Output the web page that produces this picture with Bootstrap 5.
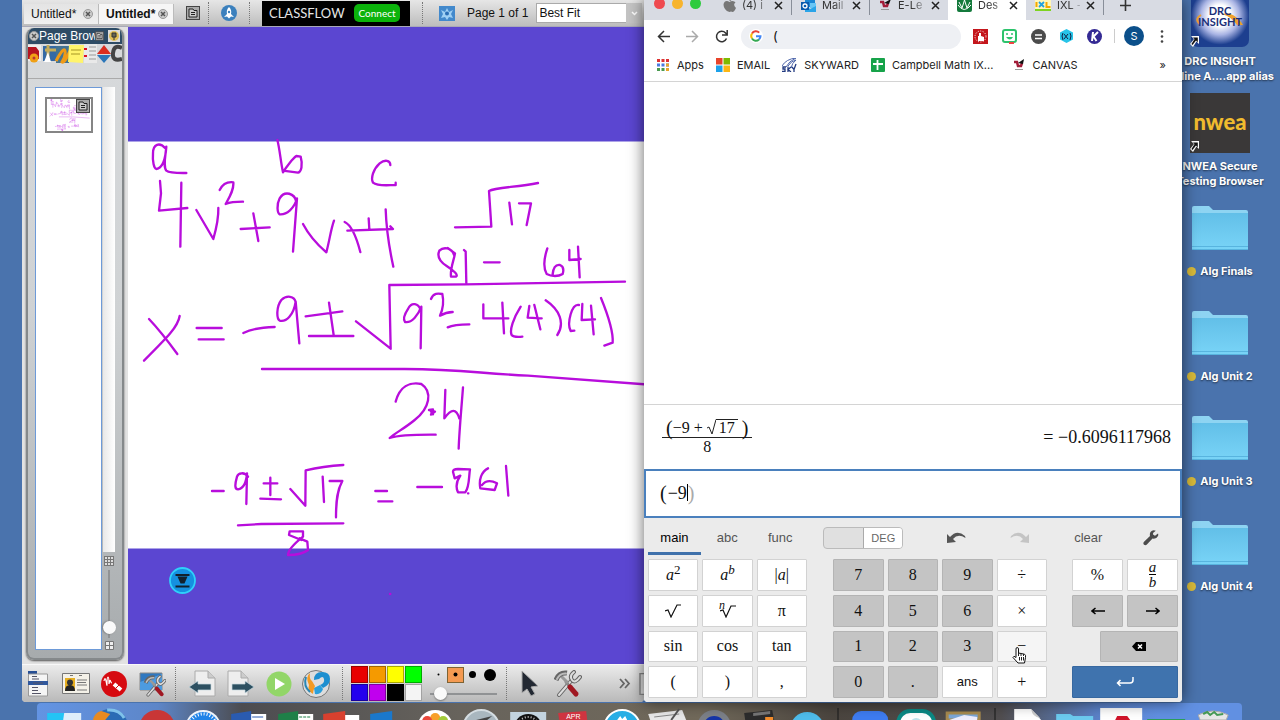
<!DOCTYPE html>
<html lang="en">
<head>
<meta charset="utf-8">
<meta name="viewport" content="width=device-width, initial-scale=1">
<title>Algebra desktop</title>
<link href="https://cdn.jsdelivr.net/npm/bootstrap@5.3.0/dist/css/bootstrap.min.css" rel="stylesheet">
<style>
:root{--ui:"Liberation Sans",Arial,sans-serif;--mac:Inter,"Liberation Sans",sans-serif;--math:"Liberation Serif","Times New Roman",serif}
body{font-family:var(--ui);font-size:12px;line-height:16px;color:#111;background:#4a73ad}
button,input,select{font:inherit;color:inherit}
svg{display:block;flex-shrink:0}
.plain{border:0;background:none;padding:0;display:flex;align-items:center;justify-content:center;flex-shrink:0}
.desktop{height:100vh;display:grid;grid-template-columns:22px minmax(0,622fr) minmax(0,538fr) 98px;grid-template-rows:minmax(0,1fr) 18px;background:#4a73ad}
/* whiteboard app */
.board{grid-column:2;background:#d9d9d9;border-radius:0 0 4px 4px;overflow:hidden}
.topbar{height:27px;background:linear-gradient(#e6e6e6,#bdbdbd);border-bottom:1px solid #a9a9b8;padding-left:2px}
.topbar>*{flex-shrink:0}
.doc{height:20px;width:75px;padding:0 5px 0 7px;background:linear-gradient(#e4e4e4,#f0f0f0);border-right:1px solid #bbb;margin-top:1px}
.doc.on{font-weight:bold;background:#f6f6f6}
.dots{width:1px;border-left:1px dotted #777;align-self:stretch;margin:2px 0}
.gapx{margin-left:12px;margin-right:12px}
.flow{background:#000;width:148px;height:25px;padding:0 10px 0 7px;font-family:Lato,sans-serif}
.flow span{color:#e5e5e5;font-size:13px}
.connect{background:#0bb30b;color:#fff;border:0;border-radius:5px;width:46px;height:18px;font-size:10px;line-height:12px;padding:0}
.zoomsel{appearance:none;border:1px solid #aaa;border-right:0;border-radius:0;background:#fff;width:90px;height:20px;padding:0 2px;font-size:12px;margin-left:8px}
.drop{width:16px;height:20px;background:#c4c4c4}
.side{width:106px;padding:1px 4px 4px;background:#e2e2e2}
.panel{border:2px solid #85898b;border-top:0;border-radius:8px;background:linear-gradient(#d8dadc,#cfd2d4 45%,#a7abad);overflow:hidden;box-shadow:0 1px 2px #555}
.ptitle{height:16px;background:#2e4c66;color:#fff;padding:0 2px 0 1px}
.ptitle span{flex:1;width:0;overflow:hidden;white-space:nowrap}
.ptools{height:35px;border-bottom:1px solid #aaa}
.pages{width:67px;background:#fff;border:1px solid #6d9ad8;margin-left:7px;padding:9px 0}
.thumb{position:relative;width:48px;height:36px;border:2px solid #858585;margin:0 auto;background:#fff;--pen:11}
.thumb .tmenu{position:absolute;right:1px;top:0}
.scroll{width:14px}
.track{flex:1;background:linear-gradient(90deg,#e8e8e8,#fff);width:12px;margin-bottom:4px}
.vbox{width:14px;height:73px;display:flex;align-items:center;justify-content:center;margin:1px 0}
.vbox input{width:68px;transform:rotate(90deg);flex-shrink:0}
input[type=range]{appearance:none;background:none;height:14px;margin:0;padding:0}
input[type=range]::-webkit-slider-runnable-track{height:2px;background:#909294}
input[type=range]::-webkit-slider-thumb{appearance:none;width:13px;height:13px;border-radius:50%;background:#fafafa;margin-top:-6px;box-shadow:0 1px 2px #777}
.canvas{background:#5b46d1;position:relative;overflow:hidden}
.canvas>svg{width:100%;height:100%}
.down{position:absolute;left:41px;bottom:70px}
.ink path{fill:none;stroke:#b80ddc;stroke-width:var(--pen,7);stroke-linecap:round;stroke-linejoin:round}
.tools{height:38px;border-top:1px solid #f8f8f8;background:linear-gradient(#ebebeb,#b9b9b9);padding-left:1px}
.tool{width:38px;height:36px}
.swatches{display:grid;grid-template-columns:repeat(4,17px);gap:1px;width:71px}
.swatches button{height:17px;border:1px solid #0005;padding:0}
.sizes .plain{width:17px;height:16px}
.sizes .sel{background:#f49a52;border:1px solid #7d6334}
/* browser window */
.browser{background:#fff;overflow:hidden;border-radius:0 0 4px 4px;font-family:var(--mac);min-width:0}
.shade{grid-column:3;grid-row:1;border-radius:0 0 4px 4px;box-shadow:0 0 16px #0009;z-index:1;display:flex;min-width:0}
.strip{height:30px;margin-top:-10px;background:#d8dbe3;font-size:11px}
.lights{width:70px;padding-left:10px;gap:7px}
.lights i{width:11px;height:11px;border-radius:50%;margin-bottom:4px}
.btab{width:78px;padding:0 8px 0 9px;gap:6px;height:30px;display:flex;align-items:center}
.btab .name{flex:1;width:0;overflow:hidden;white-space:nowrap;color:#333;-webkit-mask:linear-gradient(90deg,#000 50%,#0004)}
.btab.rule{border-right:1px solid #888e99;height:20px}
.btab.on{background:#fff;border-radius:6px 6px 0 0}
.nav1{height:32px;padding:0 18px 0 13px}
.url{background:#eef0f4;border-radius:13px;height:25px;padding:0 8px;gap:10px;margin:0 12px 0 13px;min-width:0}
.url input{border:0;background:none;padding:0;width:100%;outline:0;font-size:13px}
.exts{gap:14px}
.rule-v{width:1px;height:14px;background:#ccc;margin:0 9px 0 12px}
.avatar{width:20px;height:20px;background:#0b4f8a;font-size:11px}
.marks{height:30px;padding:0 16px 4px 13px;border-bottom:1px solid #d4d4d4;font-size:11px;color:#222;gap:12px}
.marks a{color:inherit;text-decoration:none;display:flex;align-items:center;white-space:nowrap;gap:7px}
.expr{height:65px;border-top:1px solid #d4d4d4;padding:0 11px 0 18px;font-family:var(--math);font-size:18px}
.frac{display:inline-flex;flex-direction:column;align-items:center;font-size:16px;line-height:18px}
.frac .top{border-bottom:1px solid #222;padding:0 4px;display:flex;align-items:center}
.frac .paren{font-size:20px}
.root{display:flex;align-items:stretch}
.root b{font-weight:400;border-top:1px solid #222;padding:0 3px;line-height:16px}
.field{height:49px;border:2px solid #4a80bd;padding:0 14px 2px;font-family:var(--math);font-size:18px}
.field .caret{width:1px;height:17px;background:#000}
.field .paren{font-size:20px;margin-right:1px}
.field .ghost{color:#aaa}
.calc{background:#ebebeb;font-family:var(--ui)}
.chead{display:grid;grid-template-columns:162fr 17fr 240fr 5fr 106fr;height:41px;padding:0 4px;font-size:13px;color:#555}
.ctab{flex:1;height:37px;border-bottom:3px solid transparent!important;padding-top:5px}
.ctab.on{border-color:#3f71ab!important;color:#000}
.deg{width:80px;height:22px;border:1px solid #bbb;border-radius:4px;background:#e0e0e0;overflow:hidden;padding:0;display:flex}
.deg span{width:50%;margin-left:auto;background:#fff;border-left:1px solid #aaa;font-size:11px;line-height:20px;color:#666}
.hist{grid-column:3;padding-right:40px;gap:44px;height:40px}
.misc{grid-column:5;padding-right:19px;height:40px}
.keys{padding:0 4px 4px;height:143px}
.kg{display:grid;gap:4px;grid-auto-rows:minmax(0,1fr);min-width:0}
.kg button{border:1px solid #d2d2d2;border-radius:1px;background:#fff;font-family:var(--math);font-size:16px;line-height:20px;padding:0;display:flex;align-items:center;justify-content:center;position:relative;min-width:0}
.kg .num{background:#c4c4c4;border-color:#b4b4b4}
.kg sup{font-size:13px;top:-6px}
.kg .ans{font-family:var(--ui);font-size:13px}
.kg .enter{background:#3f73ae;border-color:#3768a0;grid-column:span 2}
.kg .bksp{grid-column:span 2;margin-left:26%}
.kg .nth{font-size:12px;line-height:10px;margin:-12px -5px 0 0}
.hand{position:absolute;left:14px;top:15px}
.ab{font-size:15px;line-height:14px;font-style:italic}
.ab i{display:block}.ab i:first-child{border-bottom:1px solid #000}
/* desktop icons */
.iconcol{grid-column:4;overflow:hidden;min-width:0}
.stack{width:76px;margin-top:-12px}
.dicon{height:105px;gap:6px;color:#fff;text-decoration:none;font:bold 11px/15px var(--mac);text-shadow:0 1px 2px #0009;white-space:nowrap;text-align:center}
.pic{height:60px;width:60px;position:relative;display:flex;align-items:center;justify-content:center;flex-shrink:0}
.pic .alias{position:absolute;left:0;bottom:1px}
.pic .swoosh{position:absolute;left:4px;top:22px}
.drc{width:58px;height:58px;border-radius:7px;background:radial-gradient(circle at 50% 46%,#fff 25%,#a9b4e4 45%,#1d3f8f 68%);color:#1b2f78;font:bold 11px/11px Lato,sans-serif;padding-top:16px;text-shadow:none}
.drc div{position:relative;z-index:1}
.nwea{width:60px;height:60px;background:#3a3838;color:#f0bb2e;font:900 22px/57px Lato,sans-serif;text-shadow:none}
.dot{width:9px;height:9px;border-radius:50%;background:#d9bb3a;margin-right:4px}
.dock{grid-column:1/-1;grid-row:2;margin:1px 38px 0 37px;padding:0 6px 0 4px;border-radius:4px 4px 0 0;background:linear-gradient(90deg,#6394e3,#5d86c8 10%,#4c4c50 17%,#67635c 35%,#71695a 55%,#4b453f 66%,#514e50 80%,#5b82c8 88%,#6190e2 93%);overflow:hidden}
.dock a{flex:1;min-width:0}.dock a svg{width:100%;height:17px}
.dock hr{width:2px;margin:5px 8px 0;border:0;background:#222;opacity:.6;height:14px;flex-shrink:0}
</style>
</head>
<body>
<svg width="0" height="0" class="position-absolute">
<defs>
<g id="menuic"><rect x=".5" y=".5" width="13" height="13" fill="#aaa" stroke="#444"/><path d="M3 3h4l1 1.500h3V11H3z" fill="#ccc" stroke="#222"/><path d="M5 6.500h4M5 8.500h4" stroke="#222"/></g>
<g id="closeic"><circle cx="5" cy="5" r="4.500" fill="#ccc" stroke="#999"/><path d="M3 3l4 4M7 3l-4 4" stroke="#555" stroke-width="1.500"/></g>
<g id="xic"><path d="M1 1l7 7M8 1l-7 7" stroke="#222" stroke-width="1.500" fill="none"/></g>
<linearGradient id="fold" x2="0" y2="1"><stop stop-color="#62bfe8"/><stop offset="1" stop-color="#79d4f7"/></linearGradient>
<g id="folder"><path d="M0 2q0-2 2-2h15l4 4h33q2 0 2 2v38H0z" fill="#8ed4f2"/><path d="M0 7h56v37H0z" fill="url(#fold)"/><path d="M0 43.500h56M0 40.500h56" stroke="#58b4df" stroke-width="1"/></g>
<g id="alias"><path d="M1 0h8v8L6.500 5.500 3 11 0 8l4-5z" fill="#fff"/><path d="M3 1.500h4.800v4.700L6 4.500 2.500 9l-1-1L4.600 3z" fill="#111"/></g>
<g id="ham" fill="none" stroke-linecap="round"><path d="M5 25L17 11" stroke="#666" stroke-width="4"/><path d="M5 25L17 11" stroke="#ddd" stroke-width="2"/><path d="M12 12l4 5" stroke="#888" stroke-width="3"/><path d="M16 17l6 7" stroke="#a01822" stroke-width="5"/><path d="M8 7l5 5" stroke="#999" stroke-width="3"/><path d="M2 10q3-8 11-7" stroke="#666" stroke-width="5" stroke-linecap="butt"/><path d="M3 9q3-6 9-5.500" stroke="#bbb" stroke-width="2"/><path d="M20 2q-5 4-2 8t8-3" stroke="#666" stroke-width="4"/><path d="M20 2q-5 4-2 8t8-3" stroke="#ddd" stroke-width="2"/></g>
<g id="ink" class="ink">
<g transform="translate(128 130) scale(.33333)">
<path d="M112 55C95 35 75 42 75 70c-2 25 3 45 10 47 15-2 27-22 30-67-3 30-10 60 0 72 10 8 35 7 60 7"/>
<path d="M96 153l3 37-6 52 85-8M160 158l-3 192M205 240l51 87c9-32 16-62 15-93"/>
<path d="M275 180c10-20 25-25 41-23 2 23-11 43-23 65 17-7 32-7 52-7M338 297l87-5M376 250l15 83"/>
<path d="M505 215c-5-25-35-35-50-10-10 20-7 43 0 48 20 2 45-18 52-48L495 365M525 282c20 38 50 68 70 85 10-37 13-67 23-95"/>
<path d="M650 276c20 9 35 44 47 90M658 302l137-5-8-8M722 265l2 32M773 238c2 62 12 122 23 172"/>
<path d="M448 30c7 25 10 65 17 97 10-17 30-42 40-49l13 2c7 25 2 45-8 48l-45-6"/>
<path d="M787 105c0-15-17-17-32-5-20 18-27 45-20 58 15 12 45 7 68 7v-7"/>
<path d="M63 567c17 18 47 53 85 105M155 558c-5 32-35 62-107 134M206 594h75M212 628h75"/>
<path d="M346 609c24-12 54-17 94-18M503 517c-3-20-28-22-43-7-15 20-15 55-5 62 20 5 42-17 48-57l11 125M533 559l110-15M603 518l14 97M543 618h133"/>
<path d="M684 574l104 82-4-191 227-2 480-8"/>
</g>
<g transform="translate(380 160) scale(.33333)">
<path d="M225 202l109-2-7-107c18-11 83-11 147-24M388 128l8 65M417 130h36l-13 65"/>
<path d="M222 285c-7-23-32-25-44-13-8 18 2 33 22 46 25 17 35 27 28 32h-15c-3-25 9-50 12-70l-22-16M252 270l5 5 2 95M312 307h47"/>
<path d="M502 265c-10 30-12 60-2 77 15 8 35 8 48 0 5-17 0-24-8-27-15-2-20 10-22 27M568 270v30l34-3M594 260l5 92"/>
<path d="M122 450c-7-20-27-25-37-5-13 20-15 35-10 41 20 4 40-21 49-46l-2 125M153 417c7-19 22-17 34-15 5 23 3 43-7 65 15-9 25-11 38-11M203 502c17-8 37-9 65-9"/>
<path d="M310 433v42h75M367 428l5 92M422 440c-22 35-34 70-27 85 5 7 20 6 32 5M448 438l-5 35 42 2M463 435l18 73M497 421c43 29 58 69 35 104"/>
<path d="M597 435c-22-5-37 55-25 78l11-1M607 432l-2 48 40-2M633 437l8 86M663 414c27 66 37 106 35 134l-25 9"/>
</g>
<g transform="translate(128 330) scale(.33333)">
<path d="M402 117h428c170 1 220 13 370 20l350 26"/>
<path d="M803 215c12-45 42-60 77-53 35 23 25 73-20 108-30 25-60 40-75 54 35-11 85-10 138-10M903 240l12-2-6 16 12-9-14-4 8 12M952 180l-3 85c21-30 36-30 45 0M1005 172c-5 68-11 128-13 184"/>
<path d="M252 483h35M360 440c-10-15-30-12-33 0-7 25-7 38 3 38 20-3 25-23 27-48l-2 92M407 460h41M427 443v52M397 506l62 2M487 477l45 50 1-106c37-9 77-14 113-16M584 440l4 76M605 453h38c-15 27-19 57-19 109M330 586l70-4 246-2"/>
<path d="M520 630l-37-15 2-11h40v16c-25 20-45 40-45 55 25 0 50-7 60-15l-2-25-23-10M742 483h35M751 514h42M868 471h74"/>
<path d="M997 437l-17 8-5-20q0-8 15-8l36 1c-4 22-1 52-14 69h-22c-8-17-2-37 7-50M1020 490h1M1080 415c-20 10-28 35-23 60l43 5 7-20c-22-12-37-5-45 5M1134 408l7 89M786 792h1"/>
</g>
</g>
</defs>
</svg>

<main class="desktop">
<section class="board d-flex flex-column">
  <header class="topbar d-flex align-items-center">
    <button class="plain doc justify-content-between"><span>Untitled*</span><svg width="10" height="10"><use href="#closeic"/></svg></button>
    <button class="plain doc on justify-content-between"><span>Untitled*</span><svg width="10" height="10"><use href="#closeic"/></svg></button>
    <button class="plain ms-2 px-1 me-1" aria-label="Menu"><svg width="14" height="14"><use href="#menuic"/></svg></button>
    <i class="dots"></i>
    <button class="plain gapx" aria-label="Launch"><svg width="16" height="16"><circle cx="8" cy="8" r="8" fill="#3b80bd"/><path d="M8 2q3 3 2 7l3 3-3-.500-2 2-2-2L3 12l3-3Q5 5 8 2z" fill="#fff"/><circle cx="8" cy="7" r="1.200" fill="#3b80bd"/></svg></button>
    <i class="dots"></i>
    <div class="flow gapx d-flex align-items-center justify-content-between"><span>CLASSFLOW</span><button class="connect">Connect</button></div>
    <i class="dots me-3"></i>
    <button class="plain" aria-label="Board"><svg width="16" height="15"><path d="M0 0h16v15H0z" fill="#4289cc"/><path d="M2 4l4 2 2-4 2 4 4-2-2 4 2 4-4-1-2 3-2-3-4 1 2-4z" fill="#9fd0f4"/><circle cx="8" cy="7.500" r="2" fill="#2a6eb5"/></svg></button>
    <label for="fit" class="ms-2 ps-1 text-nowrap">Page 1 of 1</label>
    <select id="fit" class="zoomsel"><option>Best Fit</option></select>
    <div class="drop d-flex align-items-center justify-content-center"><svg width="7" height="5"><path d="M1 1l2.500 2.500L6 1" fill="none" stroke="#fff" stroke-width="1.500"/></svg></div>
  </header>
  <div class="d-flex flex-grow-1" style="min-height:0">
    <aside class="side d-flex">
      <div class="panel d-flex flex-column flex-grow-1">
        <div class="ptitle d-flex align-items-center"><svg width="10" height="10"><use href="#closeic"/></svg><span>Page Browser</span><svg width="9" height="10" viewBox="0 0 14 14"><use href="#menuic"/></svg><svg class="ms-1" width="12" height="12"><path d="M0 0h12v12H0z" fill="#ddd"/><circle cx="6" cy="6" r="5" fill="#dfbd55"/><path d="M4 3h4v4H4zM6 7v3" stroke="#333" fill="#665"/></svg></div>
        <div class="ptools"><svg width="94" height="20" viewBox="0 0 94 20"><path d="M0 1h13v16H0z" fill="#eee"/><path d="M0 3h8l3 4v8H0z" fill="#b41420"/><circle cx="6" cy="14" r="4.500" fill="#f0a015"/><circle cx="6" cy="14" r="1.500" fill="#b33"/><path d="M15 2h13v15H15z" fill="#356aa5"/><path d="M20 1v12M17 6h11" stroke="#c6ad59" stroke-width="3"/><path d="M16 18l4-10 3 10z" fill="#fff"/><path d="M28 2h13v17H28z" fill="#447493"/><path d="M28 17q8-15 9-10t-3 11q2 2 8-11" stroke="#f09a16" stroke-width="3" fill="none"/><path d="M41 1h15l-1 18-15-1z" fill="#fff46b"/><path d="M43 6h10M43 10h9" stroke="#a69625"/><path d="M56 0h13v19H56z" fill="#e9e9e9"/><path d="M56 5h3M56 12h3" stroke="#d12" stroke-width="2"/><path d="M61 3h7M61 7h7M61 11h7M61 15h7" stroke="#999"/><path d="M69 10l7-9 7 9z" fill="#da2e20"/><path d="M69 11h14l-7 8z" fill="#2b76b9"/><path d="M94 4q-8-4-9 5t9 6" fill="none" stroke="#444" stroke-width="4"/></svg></div>
        <div class="d-flex flex-grow-1 pt-2 pb-2">
          <div class="pages"><div class="thumb"><svg width="44" height="32" viewBox="128 141 516 408"><use href="#ink"/></svg><svg class="tmenu" width="14" height="14"><use href="#menuic"/></svg></div></div>
          <div class="scroll d-flex flex-column align-items-center">
            <div class="track"></div>
            <svg width="10" height="10"><path d="M0 0h10v10H0z" fill="#ddd"/><path d="M.500 0v10M3.500 0v10M6.500 0v10M9.500 0v10M0 .500h10M0 3.500h10M0 6.500h10M0 9.500h10" stroke="#777"/></svg>
            <div class="vbox"><input type="range" min="0" max="100" value="93" aria-label="Thumbnail size"></div>
            <svg width="9" height="9"><path d="M.500.500h8v8h-8z" fill="#eee" stroke="#777"/><path d="M4.500 0v9M0 4.500h9" stroke="#777"/></svg>
          </div>
        </div>
      </div>
    </aside>
    <div class="canvas flex-grow-1">
      <svg viewBox="128 27 516 637" preserveAspectRatio="xMinYMid slice"><path d="M128 141.500h900v407H128z" fill="#fff"/><use href="#ink"/></svg>
      <button class="plain down" aria-label="Move toolbox down"><svg width="27" height="27"><circle cx="13.500" cy="13.500" r="12.500" fill="#1590e0" stroke="#2fd0fa" stroke-width="1.800"/><path d="M6.500 8h14M6.500 19.500h14" stroke="#12202c" stroke-width="2"/><path d="M8.500 9.500h10l-3 7h-4z" fill="#12202c"/></svg></button>
    </div>
  </div>
  <footer class="tools d-flex align-items-center">
    <button class="plain tool" style="width:30px" aria-label="Main menu"><svg width="20" height="27"><path d="M0 1h9v4H0z" fill="#274f95"/><path d="M.500 4h19v22H.500z" fill="#f5f5f5" stroke="#999"/><path d="M0 11h20v4H0z" fill="#31589d"/><path d="M4 6.500h5M4 9h7M5 13h10M4 17.500h6M4 20.500h6M4 23.500h9" stroke="#556"/></svg></button>
    <button class="plain tool ms-1" aria-label="Profile"><svg width="28" height="21"><path d="M.500.500h27v20H.500z" fill="#f4f1e8" stroke="#777"/><path d="M3 5h10v13H3z" fill="#e6ae20"/><circle cx="8" cy="9.500" r="3" fill="#333"/><path d="M3 18q0-6 5-6t5 6z" fill="#222"/><path d="M15 7h10M15 9.500h9M15 12h10M15 17h10M8 2.500h3M17 2.500h3" stroke="#777"/></svg></button>
    <button class="plain tool" aria-label="Annotate"><svg width="26" height="26"><circle cx="13" cy="13" r="13" fill="#d60a10"/><path d="M3 10q1-5 2 0t1 4q0-8 1-8t1 7q1-5 1.500-3t1.500 2" stroke="#fff" stroke-width="1.200" fill="none"/><path d="M13 13l7 6" stroke="#fff" stroke-width="4"/><path d="M15 17l3-3" stroke="#d60a10"/></svg></button>
    <button class="plain tool" aria-label="Desktop tools"><svg width="27" height="27"><path d="M1 3h22v17H1z" fill="#2f78c0" stroke="#888"/><path d="M1 12L23 4v16H1z" fill="#4d9be0"/><g transform="translate(5 5) scale(.8)"><use href="#ham"/></g></svg></button>
    <i class="dots ms-1 me-2"></i>
    <button class="plain tool" aria-label="Previous page"><svg width="28" height="27"><path d="M6 1h13l7 7v18H6z" fill="#eee" stroke="#aaa"/><path d="M19 1v7h7" fill="#ccc" stroke="#aaa"/><path d="M0 17l9-6v3h13v6H9v3z" fill="#2d5061" stroke="#c7d8e0" stroke-width=".700"/></svg></button>
    <button class="plain tool" aria-label="Next page"><svg width="28" height="27"><path d="M1 1h13l7 7v18H1z" fill="#eee" stroke="#aaa"/><path d="M14 1v7h7" fill="#ccc" stroke="#aaa"/><path d="M27 17l-9-6v3H5v6h13v3z" fill="#2d5061" stroke="#c7d8e0" stroke-width=".700"/></svg></button>
    <button class="plain tool" aria-label="Play"><svg width="26" height="26"><circle cx="13" cy="13" r="12.500" fill="#92d668"/><path d="M9 7v12l10-6z" fill="#fff"/></svg></button>
    <button class="plain tool" style="width:36px" aria-label="Switch application"><svg width="30" height="29"><circle cx="15" cy="15" r="13.500" fill="#ddd" stroke="#777"/><path d="M13 11q0-8 8-8t8 7q0 6-7 9l-3-3q5-2 4-6t-5 0z" fill="#1d8fd0"/><path d="M13 19l6-3 3 4q-2 6-8 5z" fill="#2aa0dc"/><path d="M8 16Q4 8 9 4q-1 6 2 8l3 5q-2 5-2 8-6-3-4-9z" fill="#f39a22"/><path d="M5 8q-3 9 4 15" stroke="#2a87b5" stroke-width="2" fill="none"/></svg></button>
    <i class="dots ms-2 me-2"></i>
    <div class="swatches">
      <button style="background:#e80000" aria-label="Red"></button><button style="background:#f59a00" aria-label="Orange"></button><button style="background:#ff0" aria-label="Yellow"></button><button style="background:#0f0" aria-label="Green"></button>
      <button style="background:#2400ee" aria-label="Blue"></button><button style="background:#c000ee" aria-label="Purple"></button><button style="background:#000" aria-label="Black"></button><button style="background:#f4f4f4" aria-label="White"></button>
    </div>
    <div class="sizes ms-2">
      <div class="d-flex"><button class="plain" aria-label="1"><svg width="3" height="3"><circle cx="1.500" cy="1.500" r="1"/></svg></button><button class="plain sel" aria-label="2"><svg width="5" height="5"><circle cx="2.500" cy="2.500" r="2"/></svg></button><button class="plain" aria-label="3"><svg width="7" height="7"><circle cx="3.500" cy="3.500" r="3.500"/></svg></button><button class="plain" aria-label="4"><svg width="12" height="12"><circle cx="6" cy="6" r="6"/></svg></button></div>
      <input type="range" class="d-block mt-1" style="width:67px" min="0" max="100" value="7" aria-label="Pen width">
    </div>
    <i class="dots ms-2 me-1"></i>
    <button class="plain tool" aria-label="Select"><svg width="18" height="27"><path d="M1 1v22l5-4 4 7 4-2-4-7 7-1z" fill="#222832" stroke="#aaa"/></svg></button>
    <button class="plain tool" aria-label="Tools"><svg width="28" height="28"><use href="#ham"/></svg></button>
    <button class="plain ms-auto me-2" aria-label="More"><svg width="12" height="11"><path d="M1 1l4 4.500L1 10M6 1l4 4.500L6 10" stroke="#666" stroke-width="1.800" fill="none"/></svg></button>
    <svg width="5" height="22"><path d="M5 .500H1v21h4" fill="#ddd" stroke="#888" stroke-width="1.500"/></svg>
  </footer>
</section>

<div class="shade">
<section class="browser d-flex flex-column flex-grow-1">
  <div class="strip d-flex align-items-center">
    <div class="lights d-flex align-items-center"><i style="background:#ef4a50"></i><i style="background:#f7b42d"></i><i style="background:#2dcb3e"></i></div>
    <div class="btab rule"><svg width="13" height="14" viewBox="0 0 13 14"><path d="M6.500 4q1-1 3-1 2 0 3 1.600-3 2.200.500 5.400-1.800 4-3.500 4-1.500-.8-3 0Q4 14 2 11-1 6 2 3.500 4.200 2.500 6.500 4zM6.500 3Q6.500.500 9 0q.200 2.500-2.500 3z" fill="#777"/></svg><span class="name">(4) i</span><svg width="9" height="9"><use href="#xic"/></svg></div>
    <div class="btab rule"><svg width="15" height="13"><path d="M4 0h10v8H4z" fill="#1b86d4"/><path d="M9 4h6v5H9z" fill="#6ac6f5"/><path d="M4 6l5 4 6-3v6H4z" fill="#2aa4e8"/><path d="M0 3h8v8H0z" fill="#0a5aad"/><circle cx="4" cy="7" r="2" fill="none" stroke="#fff" stroke-width="1.300"/></svg><span class="name">Mail</span><svg width="9" height="9"><use href="#xic"/></svg></div>
    <div class="btab"><svg width="13" height="12"><path d="M1 3h3l1 4h3l1-3" stroke="#a21c38" stroke-width="2.500" fill="none"/><path d="M5 4l7-4-2 5z" fill="#111"/><path d="M2 10.500h8" stroke="#999"/></svg><span class="name">E-Le</span><svg width="9" height="9"><use href="#xic"/></svg></div>
    <div class="btab on"><svg width="15" height="14"><rect width="15" height="14" rx="2" fill="#147a3c"/><path d="M2 4l3 6 2.500-8L10 10l3-6M1 7q6 9 13 0" stroke="#fff" fill="none"/></svg><span class="name">Des</span><svg width="9" height="9"><use href="#xic"/></svg></div>
    <div class="btab rule"><svg width="16" height="13"><path d="M0 1h16v9H0z" fill="#fff6ba"/><path d="M0 10h16v2H0z" fill="#7ed321"/><path d="M1.500 3v5M11.500 3v5h4" stroke="#f3a800" stroke-width="2" fill="none"/><path d="M4 3l5 5M9 3L4 8" stroke="#22a0e0" stroke-width="1.800"/></svg><span class="name">IXL -</span><svg width="9" height="9"><use href="#xic"/></svg></div>
    <button class="plain ms-3" aria-label="New tab"><svg width="11" height="11"><path d="M5.500 0v11M0 5.500h11" stroke="#333" stroke-width="1.600"/></svg></button>
  </div>
  <div class="nav1 d-flex align-items-center">
    <button class="plain" aria-label="Back"><svg width="13" height="13"><path d="M7 1L1.500 6.500 7 12M1.500 6.500H13" stroke="#333" stroke-width="1.500" fill="none"/></svg></button>
    <button class="plain ms-3" aria-label="Forward"><svg width="13" height="13"><path d="M6 1l5.500 5.500L6 12M11.500 6.500H0" stroke="#aaa" stroke-width="1.500" fill="none"/></svg></button>
    <button class="plain ms-3" aria-label="Reload"><svg width="13" height="13"><path d="M11.500 8.500A5.200 5.200 0 1 1 10.600 3L12 4.500M12.200 0v5H7" stroke="#333" stroke-width="1.500" fill="none"/></svg></button>
    <div class="url d-flex align-items-center flex-grow-1"><svg width="14" height="14"><circle cx="7" cy="7" r="7" fill="#fff"/><g fill="none" stroke-width="2"><path d="M3 4.500A4.500 4.500 0 0 1 10.200 3.600" stroke="#ea4335"/><path d="M3 4.500a4.500 4.500 0 0 0 0 5" stroke="#fbbc05"/><path d="M3 9.500a4.500 4.500 0 0 0 7 1" stroke="#34a853"/><path d="M10 10.500q1.500-1.400 1.500-3.300H7" stroke="#4285f4"/></g></svg><input type="text" value="(" aria-label="Address"></div>
    <div class="exts d-flex align-items-center">
      <svg width="15" height="15"><path d="M0 0h15v15H0z" fill="#c4161c"/><circle cx="7.500" cy="7.500" r="5.500" stroke="#fff" stroke-dasharray="1 1.500" fill="none"/><path d="M6 4h2v3l3 1v4H5V7h1z" fill="#fff"/></svg>
      <svg width="15" height="15"><rect x="1" y="1" width="13" height="12" rx="2" fill="#fff" stroke="#2dc36c" stroke-width="2"/><path d="M4 8q4 5 7 0z" fill="#2dc36c"/><path d="M5 4v2M10 4v2" stroke="#2dc36c" stroke-width="1.500"/><path d="M7 14h5" stroke="#e44" stroke-width="2"/></svg>
      <svg width="15" height="15"><circle cx="7.500" cy="7.500" r="7.500" fill="#4b4b4b"/><path d="M4 6h7M4 9.500h7" stroke="#fff" stroke-width="1.500"/></svg>
      <svg width="13" height="14"><path d="M6.500 0L13 3.500v7L6.500 14 0 10.500v-7z" fill="#27c4e8"/><path d="M4 5l4 5M8 5l-4 5M3 4L2 7l1 4M10 4l1 3-1 4" stroke="#124" fill="none"/></svg>
      <svg width="15" height="15"><circle cx="7.500" cy="7.500" r="7.500" fill="#342a94"/><path d="M6 3L5 12M11 3L6.500 7.500 9.500 12" stroke="#fff" stroke-width="2" fill="none"/></svg>
    </div>
    <i class="rule-v"></i>
    <button class="plain avatar rounded-circle text-white">S</button>
    <button class="plain ms-3" aria-label="Menu"><svg width="4" height="13"><g fill="#444"><circle cx="2" cy="1.500" r="1.300"/><circle cx="2" cy="6.500" r="1.300"/><circle cx="2" cy="11.500" r="1.300"/></g></svg></button>
  </div>
  <nav class="marks d-flex align-items-center">
    <a href="#"><svg width="13" height="12"><path d="M0 1.500h12" stroke="#d33" stroke-width="3" stroke-dasharray="3 1.500"/><path d="M0 6h12" stroke="#4a7ae0" stroke-width="3" stroke-dasharray="3 1.500"/><path d="M0 10.500h12" stroke="#4a9a50" stroke-width="3" stroke-dasharray="3 1.500"/><path d="M9 9h3v3H9zM9 4.500h3v3H9z" fill="#e6a62c"/></svg>Apps</a>
    <a href="#"><svg width="14" height="14"><path d="M0 0h6.500v6.500H0z" fill="#e8442a"/><path d="M7.500 0H14v6.500H7.500z" fill="#7fba00"/><path d="M0 7.500h6.500V14H0z" fill="#1da1ea"/><path d="M7.500 7.500H14V14H7.500z" fill="#fcb714"/></svg>EMAIL</a>
    <a href="#"><svg width="15" height="14"><path d="M0 8Q4 1 14 0 7 3 4 9M6 8q3-5 8-6-4 3-5 8" stroke="#4e66ab" fill="none"/><path d="M4 9H1v2h2v2.500H0M6 8.500V14M9 9l-3 2.500L9 14M10 9l2 2.500L14 6M12 11v3" stroke="#223a80" stroke-width="1.300" fill="none"/></svg>SKYWARD</a>
    <a href="#"><svg width="14" height="14"><rect width="14" height="14" rx="1" fill="#17a34a"/><path d="M6.500 2v10M2 6h10" stroke="#fff" stroke-width="1.800"/></svg>Campbell Math IX...</a>
    <a href="#" class="ms-2"><svg width="12" height="12"><path d="M1 3h3l1 4h3l1-3" stroke="#a21c38" stroke-width="2.500" fill="none"/><path d="M5 4l6-4-1 5z" fill="#111"/><path d="M2 10.500h8" stroke="#999"/></svg>CANVAS</a>
    <a href="#" class="ms-auto" aria-label="More bookmarks">»</a>
  </nav>
  <div class="flex-grow-1"></div>
  <div class="expr d-flex align-items-center justify-content-between">
    <div class="frac"><span class="top"><span class="paren">(</span>−9 + <span class="root ms-1"><svg width="9" height="16"><path d="M0 9l2-1 3 7L9 .500" stroke="#222" fill="none"/></svg><b>17</b></span><span class="paren ms-1">)</span></span><span>8</span></div>
    <output>= −0.6096117968</output>
  </div>
  <div class="field d-flex align-items-center" role="textbox" tabindex="0" aria-label="Expression"><span class="paren">(</span><span>−9</span><i class="caret"></i><span class="paren ghost">)</span></div>
  <div class="calc">
    <div class="chead">
      <div class="d-flex"><button class="plain ctab on">main</button><button class="plain ctab">abc</button><button class="plain ctab">func</button></div>
      <div class="hist d-flex align-items-center"><button class="deg me-auto" aria-label="Angle mode"><span>DEG</span></button>
        <button class="plain" aria-label="Undo"><svg width="19" height="12"><path d="M0 11V2l3 3Q10-3 18 4l.500 2Q11 1 6 7l3 3z" fill="#555"/></svg></button>
        <button class="plain" aria-label="Redo"><svg width="19" height="12"><path d="M19 11V2l-3 3Q9-3 1 4L.500 6Q8 1 13 7l-3 3z" fill="#c4c4c4"/></svg></button></div>
      <div class="misc d-flex align-items-center justify-content-between"><button class="plain">clear</button>
        <button class="plain" aria-label="Settings"><svg width="16" height="16"><path d="M15 3.500l-3 2.200-1.800-1L10 3l2.800-2.300Q9.500-.700 7.500 2 6.500 3.800 7 6L.800 12q-1 1.500.200 2.700 1.500 1 2.900-.100L9.500 8.500q4 .700 5.500-2.500.500-1.500 0-2.500z" fill="#4c4c4c"/></svg></button></div>
    </div>
    <div class="keys d-flex">
      <div class="kg" style="flex:159;grid-template-columns:repeat(3,minmax(0,1fr))">
        <button><span><i>a</i><sup>2</sup></span></button><button><span><i>a</i><sup><i>b</i></sup></span></button><button>|<i>a</i>|</button>
        <button aria-label="Square root"><svg width="16" height="14"><path d="M0 7l3-1 3 7 6-12h4" stroke="#111" stroke-width="1.200" fill="none"/></svg></button>
        <button aria-label="Nth root"><i class="nth">n</i><svg width="16" height="14"><path d="M0 7l3-1 3 7 5-11h5" stroke="#111" stroke-width="1.200" fill="none"/></svg></button><button>π</button>
        <button>sin</button><button>cos</button><button>tan</button>
        <button>(</button><button>)</button><button>,</button>
      </div>
      <div class="kg" style="flex:214;margin:0 25px 0 26px;grid-template-columns:repeat(4,minmax(0,1fr))">
        <button class="num">7</button><button class="num">8</button><button class="num">9</button><button>÷</button>
        <button class="num">4</button><button class="num">5</button><button class="num">6</button><button>×</button>
        <button class="num">1</button><button class="num">2</button><button class="num">3</button><button style="background:#f5f5f5">−<svg class="hand" width="15" height="17"><path d="M4 9V2q0-1.500 1.200-1.500T6.500 2v4l6 1.200q1.500.800 1 3.300l-1 5.500H6L1 10.500q.500-2.500 3 0z" fill="#fff" stroke="#111"/><path d="M7.500 10v3.500M9.500 10v3.500M11.500 10v3.500M6.500 6v3M9 6.500V9M11.500 7v2" stroke="#222"/></svg></button>
        <button class="num">0</button><button class="num">.</button><button class="ans">ans</button><button>+</button>
      </div>
      <div class="kg" style="flex:106;grid-template-columns:repeat(2,minmax(0,1fr))">
        <button>%</button><button><span class="ab"><i>a</i><i>b</i></span></button>
        <button class="num" aria-label="Left"><svg width="14" height="8"><path d="M14 4H2M4.500 1L1 4l3.500 3" stroke="#000" stroke-width="1.500" fill="none"/></svg></button><button class="num" aria-label="Right"><svg width="14" height="8"><path d="M0 4h12M9.500 1L13 4 9.500 7" stroke="#000" stroke-width="1.500" fill="none"/></svg></button>
        <button class="num bksp" aria-label="Backspace"><svg width="14" height="9"><path d="M4 0h10v9H4L0 4.500z"/><path d="M6 2.500l4 4M10 2.500l-4 4" stroke="#fff" stroke-width="1.500"/></svg></button>
        <button class="enter" aria-label="Enter"><svg width="18" height="10"><path d="M17 0v3q0 3-3 3H2M4.500 3L1.500 6l3 3" stroke="#fff" stroke-width="1.500" fill="none"/></svg></button>
      </div>
    </div>
  </div>
</section>
</div>

<aside class="iconcol"><div class="stack d-flex flex-column">
  <a href="#" class="dicon d-flex flex-column align-items-center"><div class="pic"><div class="drc"><svg class="swoosh" width="52" height="18"><path d="M28 4q10-3 19 8l2 3h-6q-5-8-15-11z" fill="#f0a12c"/><path d="M7 5Q0 9 6 14" stroke="#f0a12c" stroke-width="2" fill="none"/></svg><div>DRC</div><div>INSIGHT</div></div><svg class="alias" width="9" height="11"><use href="#alias"/></svg></div><span>DRC INSIGHT<br>Online A....app alias</span></a>
  <a href="#" class="dicon d-flex flex-column align-items-center"><div class="pic"><div class="nwea">nwea</div><svg class="alias" width="9" height="11"><use href="#alias"/></svg></div><span>NWEA Secure<br>Testing Browser</span></a>
  <a href="#" class="dicon d-flex flex-column align-items-center"><div class="pic"><svg width="56" height="44"><use href="#folder"/></svg></div><span class="d-flex align-items-center"><i class="dot"></i>Alg Finals</span></a>
  <a href="#" class="dicon d-flex flex-column align-items-center"><div class="pic"><svg width="56" height="44"><use href="#folder"/></svg></div><span class="d-flex align-items-center"><i class="dot"></i>Alg Unit 2</span></a>
  <a href="#" class="dicon d-flex flex-column align-items-center"><div class="pic"><svg width="56" height="44"><use href="#folder"/></svg></div><span class="d-flex align-items-center"><i class="dot"></i>Alg Unit 3</span></a>
  <a href="#" class="dicon d-flex flex-column align-items-center"><div class="pic"><svg width="56" height="44"><use href="#folder"/></svg></div><span class="d-flex align-items-center"><i class="dot"></i>Alg Unit 4</span></a>
</div></aside>

<nav class="dock d-flex">
  <a href="#" aria-label="Finder"><svg viewBox="0 0 46 17"><path d="M6 10h17v7H6z" fill="#23c4f5"/><path d="M23 10h17v7H22z" fill="#dfeefa"/></svg></a>
  <a href="#" aria-label="Firefox"><svg viewBox="0 0 46 17"><circle cx="23" cy="24" r="18" fill="#2a6cb5"/><path d="M5 24Q5 10 14 8l9 3-5 6z" fill="#e88a20"/><path d="M20 7q12-1 17 8" stroke="#7fc2ea" stroke-width="3" fill="none"/></svg></a>
  <a href="#" aria-label="Annotate"><svg viewBox="0 0 46 17"><circle cx="23" cy="25" r="18" fill="#c93636"/></svg></a>
  <a href="#" aria-label="Safari"><svg viewBox="0 0 46 17"><circle cx="23" cy="25" r="18" fill="#f0f4fa"/><circle cx="23" cy="25" r="16" fill="#1f83e8"/><circle cx="23" cy="25" r="14" stroke="#fff" stroke-dasharray="1 2" stroke-width="3" fill="none"/></svg></a>
  <a href="#" aria-label="Word"><svg viewBox="0 0 46 17"><path d="M24 11h16v6H24z" fill="#fff"/><path d="M5 11l20-3v9H5z" fill="#2a5bb0"/><path d="M26 14h11" stroke="#2a5bb0"/></svg></a>
  <a href="#" aria-label="Excel"><svg viewBox="0 0 46 17"><path d="M24 11h16v6H24z" fill="#fff"/><path d="M5 11l20-3v9H5z" fill="#1e8048"/><path d="M26 14h11" stroke="#1e8048" stroke-dasharray="3 1"/></svg></a>
  <a href="#" aria-label="PowerPoint"><svg viewBox="0 0 46 17"><path d="M24 12h16v5H24z" fill="#fff"/><path d="M4 11l22-3v9H4z" fill="#d8402e"/></svg></a>
  <a href="#" aria-label="Outlook"><svg viewBox="0 0 46 17"><path d="M4 11l22-3v9H4z" fill="#1a78cc"/></svg></a>
  <a href="#" aria-label="Photos"><svg viewBox="0 0 46 17"><circle cx="23" cy="25" r="18" fill="#fff"/><circle cx="23" cy="15" r="5" fill="#f7a02a"/><circle cx="15" cy="18" r="5" fill="#e9473a"/><circle cx="31" cy="18" r="5" fill="#a3cb3a"/></svg></a>
  <a href="#" aria-label="Launchpad"><svg viewBox="0 0 46 17"><circle cx="23" cy="25" r="18" fill="#a9b7bf" stroke="#d5dde2" stroke-width="2"/><path d="M18 17l16-4-5 4z" fill="#444"/></svg></a>
  <a href="#" aria-label="Image capture"><svg viewBox="0 0 46 17"><path d="M5 9h36v8H5z" fill="#c3d4df"/><circle cx="23" cy="25" r="14" fill="#111"/><circle cx="23" cy="25" r="11" stroke="#ccc" stroke-dasharray="1 2" stroke-width="2" fill="none"/></svg></a>
  <a href="#" aria-label="Calendar"><svg viewBox="0 0 46 17"><path d="M7 10l28-2 1 9H8z" fill="#cf3440"/><text x="15" y="16" font-size="7" fill="#fff" font-family="Liberation Sans">APR</text></svg></a>
  <a href="#" aria-label="Messages"><svg viewBox="0 0 46 17"><circle cx="25" cy="25" r="18" fill="#27aee5" stroke="#fff" stroke-width="2"/><path d="M20 17l3-4 2 3 3-3 2 4z" fill="#fff"/></svg></a>
  <a href="#" aria-label="TextEdit"><svg viewBox="0 0 46 17"><path d="M4 11l34-4 4 10H6z" fill="#e8e8e8"/><path d="M10 14l25-3" stroke="#888"/><path d="M27 17L35 6" stroke="#555" stroke-width="2"/></svg></a>
  <a href="#" aria-label="Media player"><svg viewBox="0 0 46 17"><circle cx="24" cy="24" r="17" fill="#7c8088"/><circle cx="24" cy="24" r="11" fill="#1434a8"/></svg></a>
  <a href="#" aria-label="Calculator"><svg viewBox="0 0 46 17"><path d="M8 10l28-3 2 10H9z" fill="#2c2c2c"/><path d="M17 10l17-2v3l-17 2z" fill="#777"/><path d="M29 14h8v3h-8z" fill="#f38d2b"/></svg></a>
  <a href="#" aria-label="Skype"><svg viewBox="0 0 46 17"><circle cx="24" cy="26" r="17" fill="#4fbdec"/></svg></a>
  <hr>
  <a href="#" aria-label="Zoom"><svg viewBox="0 0 46 17"><rect x="5" y="8" width="36" height="30" rx="9" fill="#3e7cf2"/></svg></a>
  <a href="#" aria-label="WebEx"><svg viewBox="0 0 46 17"><rect x="5" y="8" width="36" height="30" rx="12" fill="#fff" stroke="#0b8a85" stroke-width="4"/><circle cx="23" cy="21" r="6" fill="#bfe3ec"/></svg></a>
  <a href="#" aria-label="Preview"><svg viewBox="0 0 46 17"><path d="M7 10h32v7H7z" fill="#7ba6d8" stroke="#a88b50" stroke-width="3"/><path d="M9 17l15-5 13 2v3z" fill="#eef"/></svg></a>
  <hr>
  <a href="#" aria-label="Document"><svg viewBox="0 0 46 17"><path d="M10 6h17l10 11H10z" fill="#fff"/><path d="M27 6q1 8 9 9z" fill="#ccc"/></svg></a>
  <a href="#" aria-label="Downloads"><svg viewBox="0 0 46 17"><path d="M5 17v-6h14l3 2h20v4z" fill="#6ccbf0"/></svg></a>
  <a href="#" aria-label="Acrobat"><svg viewBox="0 0 46 17"><path d="M3 5h42v12H3z" fill="#fff"/><path d="M20 13h10l3 4H18z" fill="#d0142a"/></svg></a>
  <a href="#" aria-label="Board"><svg viewBox="0 0 46 17"><path d="M4 16h38v1H4z" fill="#2c9e5b"/></svg></a>
  <a href="#" aria-label="Trash"><svg viewBox="0 0 46 17"><path d="M8 12q15-8 30 0l-2 5H10z" fill="#e6e6e6" stroke="#aaa"/><path d="M13 11l4-2 3 3 4-3 3 3 6-1" stroke="#495" stroke-width="2" fill="none"/></svg></a>
</nav>
</main>
<script src="https://cdn.jsdelivr.net/npm/bootstrap@5.3.0/dist/js/bootstrap.bundle.min.js"></script>
</body>
</html>
